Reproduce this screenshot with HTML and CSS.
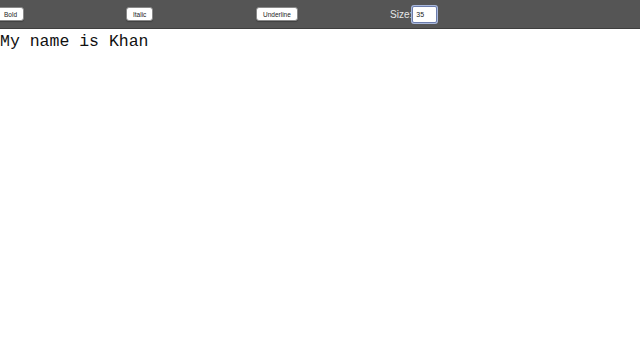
FILE: index.html
```html
<!DOCTYPE html>
<html lang="en">
<head>
    <meta charset="UTF-8">
    <meta name="viewport" content="width=device-width, initial-scale=1.0">
    <title>Text Editor</title>
    <link rel="stylesheet" href="styles.css">
</head>
<body>
    <div class="toolbar">
        <div class="tool tool-bold"><button class="btn">Bold</button></div>
        <div class="tool tool-italic"><button class="btn">Italic</button></div>
        <div class="tool tool-underline"><button class="btn">Underline</button></div>
        <div class="tool tool-size">
            <label class="size-label" for="size">Size:</label>
            <input class="size-input" id="size" type="text" value="35">
        </div>
    </div>
    <div class="editor">My name is Khan</div>
</body>
</html>
```

FILE: styles.css
```css
body {
    margin: 0;
    padding: 0;
    background-color: #fff;
    font-family: "Liberation Sans", Arial, sans-serif;
    overflow: hidden;
}
.toolbar {
    display: flex;
    align-items: center;
    height: 28px;
    background-color: #555555;
    border-bottom: 1px solid #3e3e3e;
}
.tool {
    display: flex;
    align-items: center;
    flex-shrink: 0;
}
.tool-bold {
    width: 129px;
    margin-left: -3px;
}
.tool-italic {
    width: 130px;
}
.tool-underline {
    width: 134px;
}
.btn {
    box-sizing: border-box;
    height: 14px;
    padding: 0 6px;
    font-family: "Liberation Sans", Arial, sans-serif;
    font-size: 6.5px;
    color: #222;
    background-color: #fff;
    border: 1px solid #8a8a8a;
    border-radius: 3px;
    box-shadow: 0 1px 1px rgba(0, 0, 0, 0.25);
}
.size-label {
    color: #e6e6e6;
    font-size: 10px;
}
.size-input {
    box-sizing: border-box;
    width: 25px;
    height: 17px;
    padding: 0 3px;
    font-size: 7px;
    font-family: "Liberation Sans", Arial, sans-serif;
    color: #222;
    border: 1px solid #6b7cab;
    box-shadow: 0 0 0 1px #a9b8dc;
    border-radius: 2px;
    outline: none;
}
.editor {
    font-family: "Liberation Mono", "Courier New", monospace;
    font-size: 16.5px;
    color: #111;
    padding-top: 3px;
}
```
